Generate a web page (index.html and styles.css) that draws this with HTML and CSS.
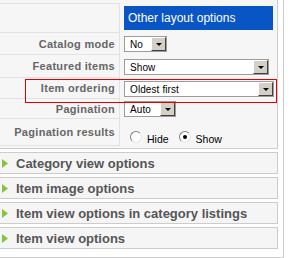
FILE: index.html
```html
<!DOCTYPE html>
<html lang="en">
<head>
    <meta charset="UTF-8">
    <meta name="viewport" content="width=device-width, initial-scale=1.0">
    <title>Category parameters</title>
    <link rel="stylesheet" href="styles.css">
</head>
<body>

    <div class="params">

        <!-- Layout options panel -->
        <div class="panel">
            <table class="param-table">
                <tr class="row-title">
                    <td class="key"></td>
                    <td class="value value-top">
                        <div class="group-title">Other layout options</div>
                    </td>
                </tr>
                <tr class="row-b">
                    <td class="key">Catalog mode</td>
                    <td class="value">
                        <div class="select select-no"><span>No</span><i class="arrow"></i></div>
                    </td>
                </tr>
                <tr class="row-c">
                    <td class="key">Featured items</td>
                    <td class="value">
                        <div class="select select-show"><span>Show</span><i class="arrow"></i></div>
                    </td>
                </tr>
                <tr class="row-d">
                    <td class="key">Item ordering</td>
                    <td class="value">
                        <div class="select select-order"><span>Oldest first</span><i class="arrow"></i></div>
                    </td>
                </tr>
                <tr class="row-e">
                    <td class="key">Pagination</td>
                    <td class="value">
                        <div class="select select-auto"><span>Auto</span><i class="arrow"></i></div>
                    </td>
                </tr>
                <tr class="row-f">
                    <td class="key">Pagination results</td>
                    <td class="value">
                        <div class="radios">
                            <span class="radio"></span><span class="radio-label">Hide</span>
                            <span class="radio checked"></span><span class="radio-label">Show</span>
                        </div>
                    </td>
                </tr>
            </table>

            <!-- highlight around the edited option -->
            <div class="highlight"></div>
        </div>

        <!-- Collapsed sections -->
        <div class="section"><svg class="toggle" width="6" height="9" viewBox="0 0 6 9"><polygon points="0,0 6,4.5 0,9" /></svg><span>Category view options</span></div>
        <div class="section"><svg class="toggle" width="6" height="9" viewBox="0 0 6 9"><polygon points="0,0 6,4.5 0,9" /></svg><span>Item image options</span></div>
        <div class="section"><svg class="toggle" width="6" height="9" viewBox="0 0 6 9"><polygon points="0,0 6,4.5 0,9" /></svg><span>Item view options in category listings</span></div>
        <div class="section"><svg class="toggle" width="6" height="9" viewBox="0 0 6 9"><polygon points="0,0 6,4.5 0,9" /></svg><span>Item view options</span></div>

    </div>

</body>
</html>
```

FILE: styles.css
```css
body {
    margin: 0;
    background: #fff;
    font-family: "Liberation Sans", Arial, sans-serif;
    overflow: hidden;
}

/* Outer box, cropped at top and left */
.params {
    box-sizing: border-box;
    width: 291px;
    margin: -10px 0 0 -7px;
    padding: 5px;
    border: 1px solid #ccc;
    background: #fff;
}

.panel {
    position: relative;
    padding: 6px 0 2px;
    margin-bottom: 3px;
    border: 1px solid #ccc;
    background: #f6f6f6;
}

.param-table {
    width: 100%;
    border-collapse: separate;
    border-spacing: 0;
}

.param-table td {
    padding: 0;
}

.row-title { height: 30px; }
.row-b { height: 22px; }
.row-c { height: 23px; }
.row-d { height: 21px; }
.row-e { height: 20px; }
.row-f { height: 27px; }

.key {
    box-sizing: border-box;
    width: 120px;
    padding-right: 4px !important;
    border-right: 1px solid #e2e2e2;
    border-bottom: 1px solid #e2e2e2;
    text-align: right;
    font-size: 11px;
    font-weight: bold;
    letter-spacing: 0.3px;
    color: #666;
    white-space: nowrap;
}

.row-title .key {
    border-top: 1px solid #e2e2e2;
}

.value {
    padding-left: 4px !important;
    vertical-align: middle;
}

.value-top {
    vertical-align: top;
    padding-top: 3px !important;
}

.group-title {
    width: 149px;
    height: 24px;
    line-height: 24px;
    padding-left: 4px;
    box-sizing: border-box;
    background: #0a55c5;
    color: #fff;
    font-size: 12px;
}

/* Classic dropdowns */
.select {
    display: flex;
    align-items: stretch;
    box-sizing: border-box;
    height: 16px;
    border: 1px solid #9c9c9c;
    background: #fff;
    font-size: 10px;
    letter-spacing: 0.1px;
    color: #000;
}

.select span {
    flex: 1;
    padding-left: 5px;
    line-height: 15px;
    white-space: nowrap;
}

.select-no { width: 43px; }
.select-show { width: 145px; }
.select-order { width: 150px; }
.select-auto { width: 52px; }

.arrow {
    position: relative;
    box-sizing: border-box;
    width: 15px;
    background: #d4d0c8;
    border: 1px solid;
    border-color: #fff #404040 #404040 #fff;
}

.arrow::after {
    content: "";
    position: absolute;
    left: 4px;
    top: 5px;
    border-left: 3px solid transparent;
    border-right: 3px solid transparent;
    border-top: 3px solid #000;
}

/* Radios */
.radios {
    display: flex;
    align-items: center;
    padding: 9px 0 0 6px;
    font-size: 10.5px;
    color: #000;
}

.radio {
    box-sizing: border-box;
    width: 12px;
    height: 12px;
    border-radius: 50%;
    border: 1px solid;
    border-color: #808080 #e6e6e6 #e6e6e6 #808080;
    background: #fff;
    position: relative;
}

.radio.checked::after {
    content: "";
    position: absolute;
    left: 3px;
    top: 3px;
    width: 4px;
    height: 4px;
    border-radius: 50%;
    background: #000;
}

.radio-label {
    margin: 3px 10px 0 5px;
}

.highlight {
    position: absolute;
    left: 25px;
    top: 82px;
    width: 252px;
    height: 24px;
    box-sizing: border-box;
    border: 1px solid #e00000;
}

/* Collapsed section headers */
.section {
    display: flex;
    align-items: center;
    height: 20px;
    margin-bottom: 3px;
    border: 1px solid #ccc;
    background: #f5f5f5;
    font-size: 13px;
    font-weight: bold;
    color: #555;
    white-space: nowrap;
}

.toggle {
    margin-left: 2px;
    fill: #86c440;
}

.section span {
    margin-left: 8px;
}
```
